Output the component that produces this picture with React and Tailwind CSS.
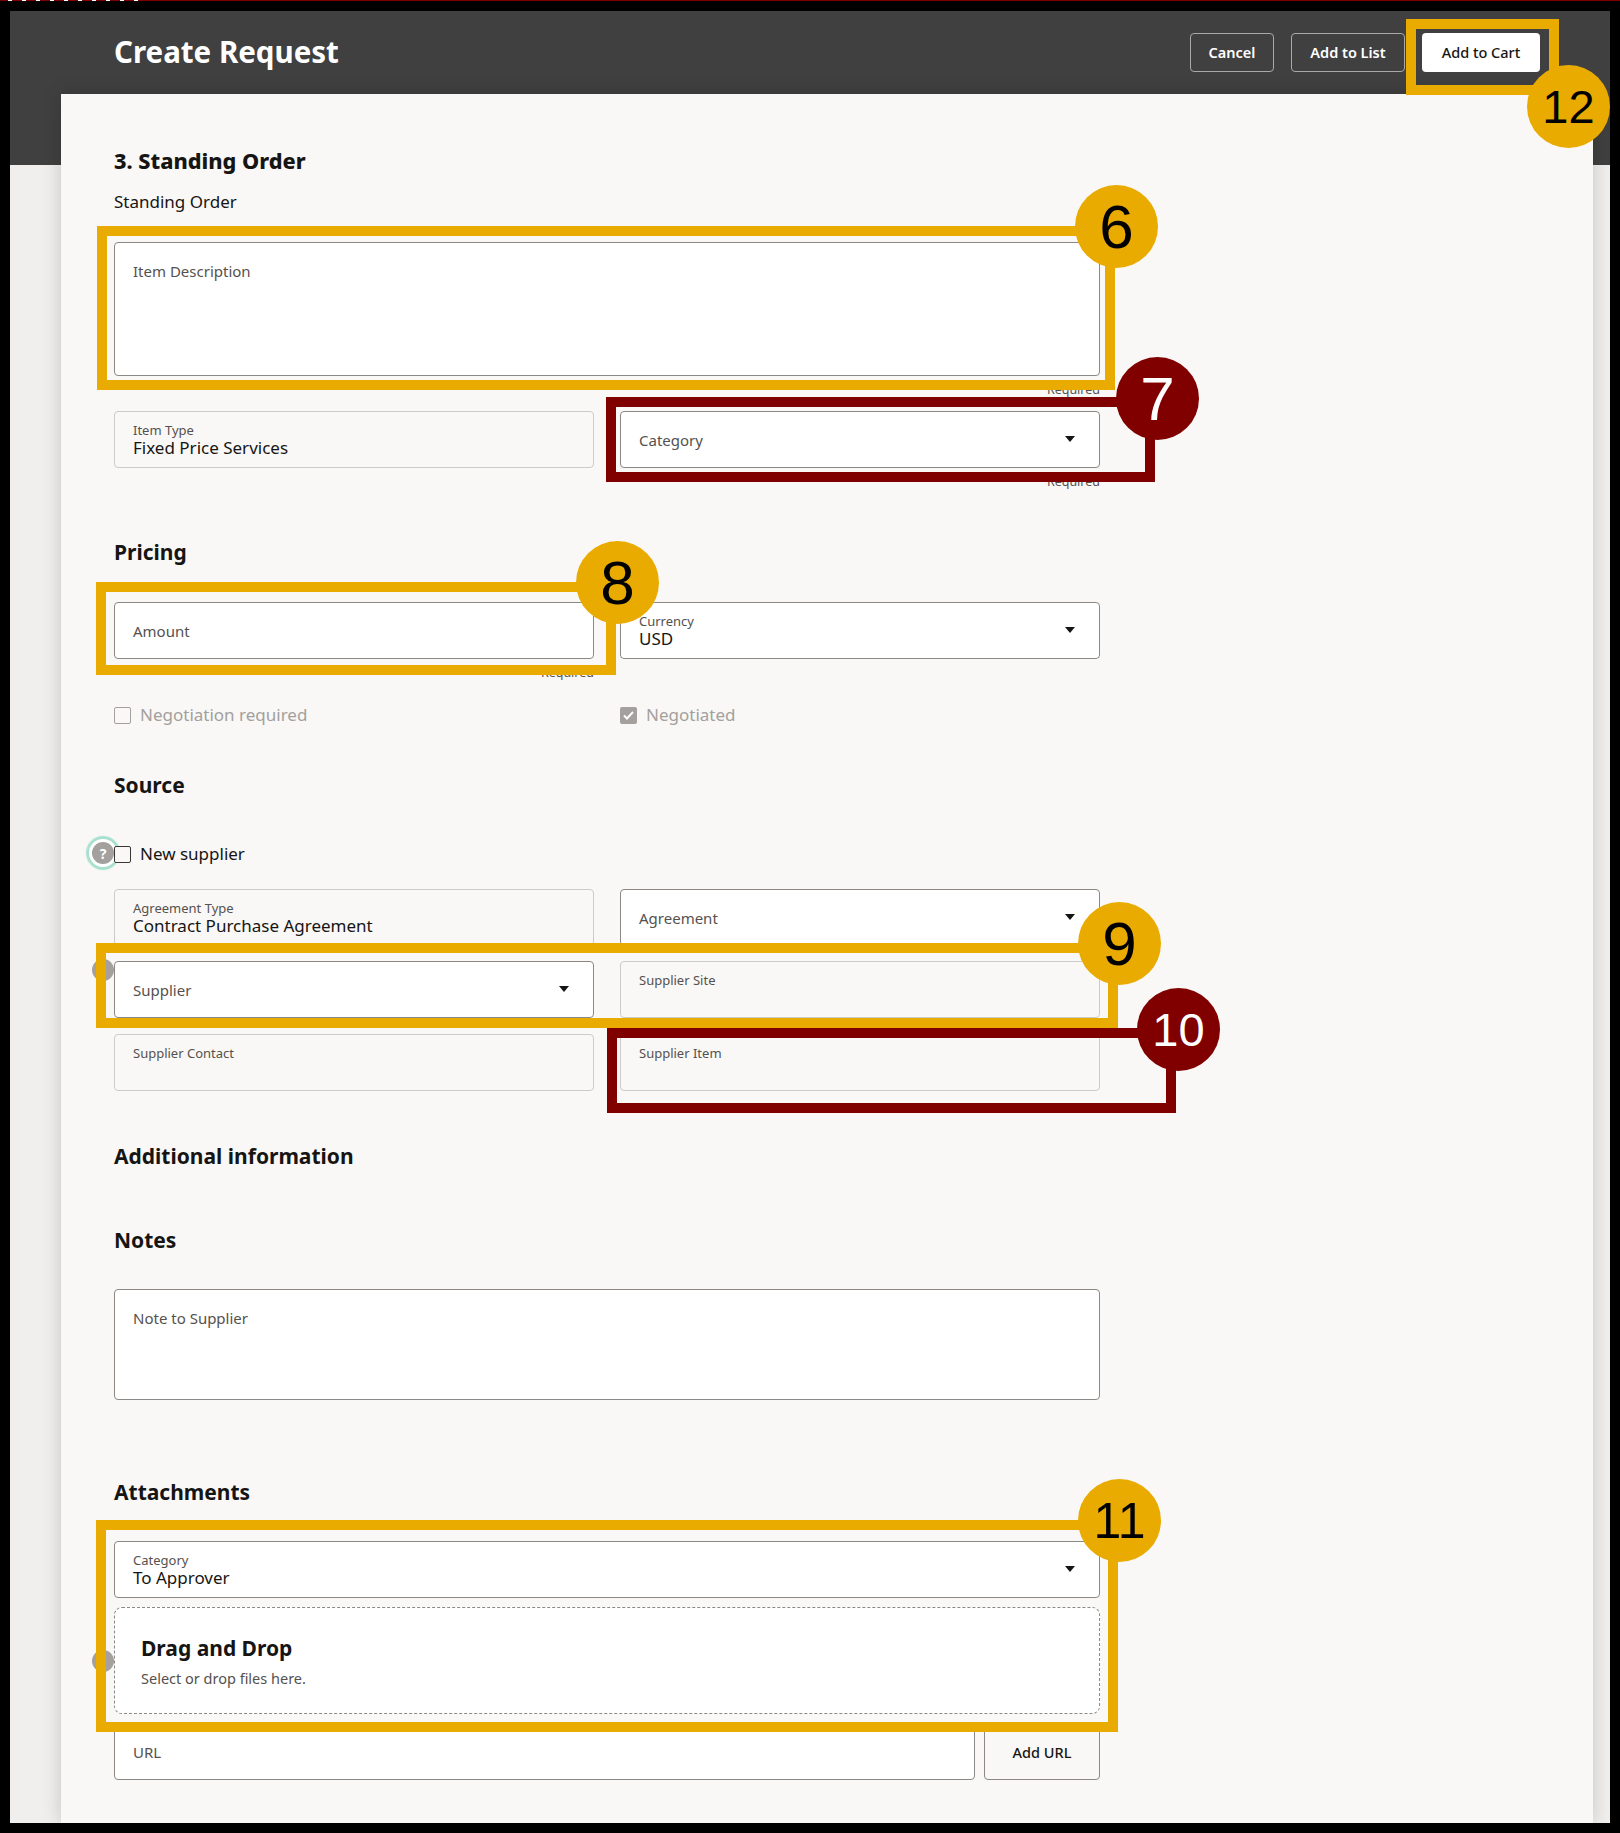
const sans = "font-['Noto_Sans','Liberation_Sans',sans-serif]"

function Caret() {
  return (
    <svg width="10" height="6" viewBox="0 0 10 6" className="-mt-[1px] shrink-0">
      <path d="M0 0h10L5 6z" fill="#161513" />
    </svg>
  )
}

function Field({ label, value, disabled, select, required, className = 'h-[57px]' }) {
  const tone = disabled ? 'border-[#cdcbc8]' : 'border-[#8b8885] bg-white'
  return (
    <div>
      <div className={`flex justify-between rounded-[4px] border pl-[18px] pr-[24px] ${tone} ${className}`}>
        <div className="min-w-0">
          {value !== undefined || disabled ? (
            <div className="pt-[10px]">
              <div className="text-[13px] leading-[17px] text-[#55514e]">{label}</div>
              <div className="text-[17px] leading-[18px] text-[#161513]">{value}</div>
            </div>
          ) : (
            <div className="pt-[18px] text-[15px] leading-[20px] text-[#55514e]">{label}</div>
          )}
        </div>
        {select && (
          <div className="flex items-center">
            <Caret />
          </div>
        )}
      </div>
      {required && (
        <div className="h-[20px] pt-[7px] text-right text-[12.5px] leading-[14px] text-[#55514e]">Required</div>
      )}
    </div>
  )
}

function Heading({ children, className = 'text-[21px] font-bold' }) {
  return <h2 className={`h-[28px] leading-[28px] text-[#161513] ${className}`}>{children}</h2>
}

function Check({ label, checked, disabled }) {
  return (
    <label className={`flex h-[24px] items-center gap-[9px] text-[17px] ${disabled ? 'text-[#a3a09d]' : 'text-[#161513]'}`}>
      {checked ? (
        <span className="flex h-[17px] w-[17px] items-center justify-center rounded-[2px] bg-[#a3a09d]">
          <svg width="11" height="9" viewBox="0 0 11 9" fill="none">
            <path d="M1 4.5 4 7.5 10 1" stroke="#fff" strokeWidth="2" />
          </svg>
        </span>
      ) : (
        <span className={`relative z-10 h-[17px] w-[17px] rounded-[2px] border bg-[#f9f8f6] ${disabled ? 'border-[#a3a09d]' : 'border-[#3a3835]'}`} />
      )}
      {label}
    </label>
  )
}

function HeaderButton({ children, primary, className }) {
  return (
    <button
      type="button"
      className={`h-[39px] rounded-[4px] text-[14.5px] ${className} ${
        primary ? 'bg-white font-medium text-[#161513]' : 'border border-[#a9a9a9] font-semibold text-white'
      }`}
    >
      {children}
    </button>
  )
}

function Callout({ n, maroon, box, circle, size = 'text-[62px]' }) {
  const border = maroon ? 'border-[#800000]' : 'border-[#eaab00]'
  const fill = maroon ? 'bg-[#800000] text-white' : 'bg-[#eaab00] text-black'
  return (
    <>
      <div className={`absolute border-[10px] ${border} ${box}`} />
      <div
        className={`absolute flex h-[83px] w-[83px] items-center justify-center rounded-full font-['Liberation_Sans',sans-serif] ${size} ${fill} ${circle}`}
      >
        {n}
      </div>
    </>
  )
}

function Dot({ className, children }) {
  return (
    <div className={`absolute flex h-[22px] w-[22px] items-center justify-center rounded-full bg-[#a3a09d] text-[14px] font-bold text-white ${className}`}>
      {children}
    </div>
  )
}

export default function App() {
  return (
    <div className={`relative h-[1833px] w-[1620px] overflow-hidden bg-black pb-[10px] pl-[10px] pr-[10px] pt-[11px] ${sans}`}>
      <div className="absolute left-0 right-0 top-0 flex h-px gap-[10px] bg-[#800000] pl-[8px]">
        {[0, 1, 2, 3, 4, 5, 6, 7, 8, 9].map((i) => (
          <span key={i} className="h-px w-[4px] bg-white" />
        ))}
      </div>

      <div className="h-[1812px] bg-[#f1efed]">
        <header className="h-[154px] bg-[#404040]">
          <div className="flex h-[83px] items-center justify-between pl-[104px] pr-[70px]">
            <h1 className="text-[29.5px] font-bold text-white">Create Request</h1>
            <div className="flex gap-[17px]">
              <HeaderButton className="w-[84px]">Cancel</HeaderButton>
              <HeaderButton className="w-[114px]">Add to List</HeaderButton>
              <HeaderButton primary className="w-[118px]">Add to Cart</HeaderButton>
            </div>
          </div>
        </header>

        <main className="-mt-[71px] ml-[51px] mr-[17px] h-[1729px] bg-[#f9f8f6] pl-[53px] pt-[53px] shadow-[0_0_18px_rgba(0,0,0,0.18)]">
          <div className="w-[986px]">
            <Heading className="text-[21.7px] font-extrabold">3. Standing Order</Heading>
            <p className="mt-[15px] h-[24px] text-[17px] leading-[24px] text-[#161513]">Standing Order</p>

            <div className="mt-[28px]">
              <Field label="Item Description" className="h-[134px]" required />
            </div>

            <div className="mt-[15px] grid grid-cols-2 gap-x-[26px]">
              <Field label="Item Type" value="Fixed Price Services" disabled />
              <Field label="Category" select required />
            </div>

            <div className="mt-[50px]">
              <Heading>Pricing</Heading>
            </div>
            <div className="mt-[36px] grid grid-cols-2 gap-x-[26px]">
              <Field label="Amount" required />
              <Field label="Currency" value="USD" select />
            </div>
            <div className="mt-[24px] grid grid-cols-2 gap-x-[26px]">
              <Check label="Negotiation required" disabled />
              <Check label="Negotiated" checked disabled />
            </div>

            <div className="mt-[44px]">
              <Heading>Source</Heading>
            </div>
            <div className="mt-[43px]">
              <Check label="New supplier" />
            </div>
            <div className="mt-[23px] grid grid-cols-2 gap-x-[26px] gap-y-[15.4px]">
              <Field label="Agreement Type" value="Contract Purchase Agreement" disabled />
              <Field label="Agreement" select />
              <Field label="Supplier" select />
              <Field label="Supplier Site" disabled />
              <Field label="Supplier Contact" disabled />
              <Field label="Supplier Item" disabled />
            </div>

            <div className="mt-[51px]">
              <Heading>Additional information</Heading>
            </div>
            <div className="mt-[56px]">
              <Heading>Notes</Heading>
            </div>
            <div className="mt-[35.2px]">
              <Field label="Note to Supplier" className="h-[111px]" />
            </div>

            <div className="mt-[78px]">
              <Heading>Attachments</Heading>
            </div>
            <div className="mt-[35px]">
              <Field label="Category" value="To Approver" select />
            </div>
            <div className="mt-[9px] h-[107px] rounded-[8px] border border-dashed border-[#8b8885] bg-white pl-[26px] pt-[26px]">
              <div className="text-[21px] font-bold leading-[28px] text-[#161513]">Drag and Drop</div>
              <div className="mt-[6px] text-[14.5px] leading-[20px] text-[#55514e]">Select or drop files here.</div>
            </div>
            <div className="mt-[9px] flex gap-[9px]">
              <div className="flex-1">
                <Field label="URL" />
              </div>
              <button
                type="button"
                className="h-[57px] w-[116px] rounded-[4px] border border-[#8b8885] pt-[2px] text-[14.5px] font-medium text-[#161513]"
              >
                Add URL
              </button>
            </div>
          </div>
        </main>
      </div>

      {/* help bubbles sitting just off the field edge */}
      <Dot className="left-[92px] top-[842px] shadow-[0_0_0_3px_#fff,0_0_1px_6px_#a8e0cf]">?</Dot>
      <Dot className="left-[92px] top-[959px]" />
      <Dot className="left-[92px] top-[1650px]" />

      <Callout n="6" box="left-[97px] top-[226px] h-[164px] w-[1018px]" circle="left-[1075px] top-[185px]" />
      <Callout n="7" maroon box="left-[606px] top-[397px] h-[85px] w-[549px]" circle="left-[1116px] top-[357px]" />
      <Callout n="8" box="left-[96px] top-[582px] h-[93px] w-[520px]" circle="left-[576px] top-[541px]" />
      <Callout n="9" box="left-[96px] top-[943px] h-[85px] w-[1022px]" circle="left-[1078px] top-[902px]" />
      <Callout n="10" maroon size="pt-[2px] text-[47px]" box="left-[607px] top-[1028px] h-[85px] w-[569px]" circle="left-[1137px] top-[988px]" />
      <Callout n="11" size="pt-[2px] text-[50px]" box="left-[96px] top-[1520px] h-[212px] w-[1022px]" circle="left-[1078px] top-[1479px]" />
      <Callout n="12" size="pt-[2px] text-[47px]" box="left-[1406px] top-[19px] h-[76px] w-[153px]" circle="left-[1527px] top-[65px]" />
    </div>
  )
}
